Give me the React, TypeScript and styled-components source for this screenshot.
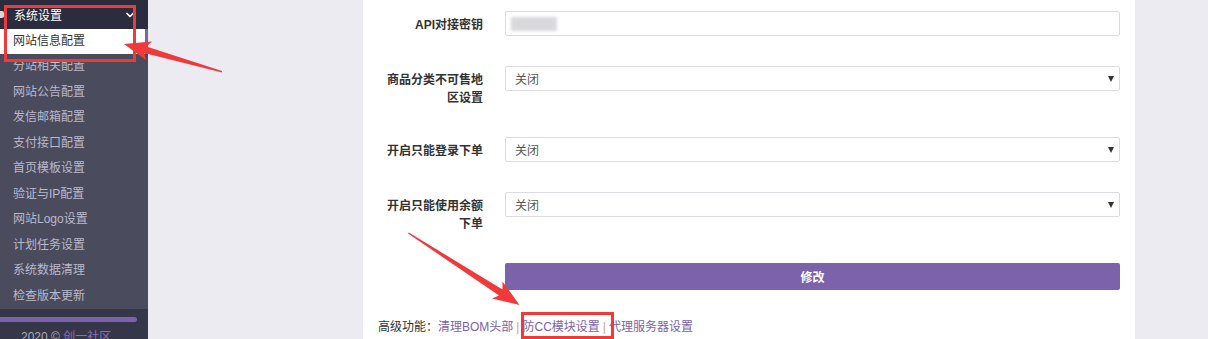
import styled, { createGlobalStyle } from "styled-components";
import { ChevronDown } from "lucide-react";

const GlobalStyle = createGlobalStyle`
  html, body {
    margin: 0;
    padding: 0;
    overflow: hidden;
  }
  body {
    font-family: "Liberation Sans", "Noto Sans CJK SC", sans-serif;
    font-size: 12px;
    color: #333;
  }
`;

const Page = styled.div`
  position: relative;
  display: flex;
  width: 1208px;
  height: 339px;
  overflow: hidden;
`;

const Sidebar = styled.aside`
  width: 148px;
  flex: 0 0 148px;
  display: flex;
  flex-direction: column;
  background: #4a4b5d;
  overflow: hidden;
`;

const MenuHeader = styled.div`
  flex-shrink: 0;
  height: 29px;
  display: flex;
  align-items: center;
  background: #2b2c3d;
  color: #fff;
  font-size: 12px;
  padding-right: 12px;
`;

const HeaderIcon = styled.span`
  width: 4px;
  height: 7px;
  margin-right: 10px;
  background: #d8d8e0;
  border-radius: 0 2px 2px 0;
`;

const HeaderTitle = styled.span`
  flex: 1;
`;

const MenuItem = styled.div<{ $active?: boolean }>`
  flex-shrink: 0;
  height: ${(p) => (p.$active ? "25px" : "25.5px")};
  line-height: ${(p) => (p.$active ? "25px" : "25.5px")};
  padding-left: 13px;
  font-size: 12px;
  color: ${(p) => (p.$active ? "#333" : "#b9b9cb")};
  background: ${(p) => (p.$active ? "#fff" : "transparent")};
  border-right: 3px solid ${(p) => (p.$active ? "#7b62aa" : "transparent")};
  white-space: nowrap;
`;

const SideFooter = styled.div`
  flex: 1 0 auto;
  background: #353648;
  padding-top: 8px;
`;

const FooterBar = styled.div`
  width: 137px;
  height: 5px;
  border-radius: 0 3px 3px 0;
  background: #7b62aa;
`;

const Copyright = styled.div`
  padding-left: 21px;
  margin-top: 5px;
  color: #a9a9b8;
  font-size: 12px;
  white-space: nowrap;
  & a {
    color: #8a6cc2;
    text-decoration: none;
  }
`;

const Main = styled.main`
  flex: 1;
  background: #ecebf2;
  padding-left: 215px;
`;

const Card = styled.section`
  width: 742px;
  height: 100%;
  background: #fff;
  padding: 11px 15px 0;
`;

const FormRow = styled.div`
  display: flex;
  align-items: flex-start;
  margin-bottom: 30px;
`;

const Label = styled.label`
  width: 105px;
  flex: 0 0 105px;
  text-align: right;
  font-weight: bold;
  font-size: 12px;
  line-height: 17.5px;
  padding-top: 6px;
  color: #333;
`;

const Field = styled.div`
  flex: 1;
  height: 23px;
  margin-left: 22px;
  border: 1px solid #dcdbe4;
  border-radius: 2px;
  display: flex;
  align-items: center;
  justify-content: space-between;
  padding: 0 5px 0 9px;
  color: #555;
  font-size: 12px;
`;

const Secret = styled.span`
  width: 46px;
  height: 14px;
  margin-left: -4px;
  background: #d9d9dd;
  filter: blur(1.5px);
`;

const Caret = styled.span`
  width: 0;
  height: 0;
  border-left: 3.5px solid transparent;
  border-right: 3.5px solid transparent;
  border-top: 6px solid #333;
`;

const SubmitRow = styled.div`
  padding-left: 127px;
`;

const SubmitButton = styled.button`
  width: 100%;
  height: 27px;
  border: none;
  border-radius: 2px;
  background: #7b62aa;
  color: #fff;
  font-family: inherit;
  font-size: 12px;
  font-weight: bold;
`;

const Advanced = styled.div`
  margin-top: 29px;
  line-height: 17px;
  font-size: 12px;
  color: #333;
  white-space: nowrap;
  & a {
    color: #7b62aa;
    text-decoration: none;
  }
`;

const Sep = styled.span`
  color: #d9a35b;
  margin: 0 3px;
`;

const Overlay = styled.svg`
  position: absolute;
  left: 0;
  top: 0;
  pointer-events: none;
`;

const menu = [
  "分站相关配置",
  "网站公告配置",
  "发信邮箱配置",
  "支付接口配置",
  "首页模板设置",
  "验证与IP配置",
  "网站Logo设置",
  "计划任务设置",
  "系统数据清理",
  "检查版本更新",
];

const selects = [
  { label: "商品分类不可售地区设置", value: "关闭" },
  { label: "开启只能登录下单", value: "关闭" },
  { label: "开启只能使用余额下单", value: "关闭" },
];

export default function App() {
  return (
    <>
      <GlobalStyle />
      <Page>
        <Sidebar>
          <MenuHeader>
            <HeaderIcon />
            <HeaderTitle>系统设置</HeaderTitle>
            <ChevronDown size={12} strokeWidth={3.5} color="#fff" />
          </MenuHeader>
          <MenuItem $active>网站信息配置</MenuItem>
          {menu.map((m) => (
            <MenuItem key={m}>{m}</MenuItem>
          ))}
          <SideFooter>
            <FooterBar />
            <Copyright>
              2020 © <a href="#">创一社区</a>
            </Copyright>
          </SideFooter>
        </Sidebar>

        <Main>
          <Card>
            <FormRow>
              <Label>API对接密钥</Label>
              <Field>
                <Secret />
              </Field>
            </FormRow>
            {selects.map((s) => (
              <FormRow key={s.label}>
                <Label>{s.label}</Label>
                <Field>
                  <span>{s.value}</span>
                  <Caret />
                </Field>
              </FormRow>
            ))}
            <SubmitRow>
              <SubmitButton>修改</SubmitButton>
            </SubmitRow>
            <Advanced>
              高级功能：<a href="#">清理BOM头部</a>
              <Sep>|</Sep>
              <a href="#">防CC模块设置</a>
              <Sep>|</Sep>
              <a href="#">代理服务器设置</a>
            </Advanced>
          </Card>
        </Main>

        {/* screenshot annotations */}
        <Overlay width="1208" height="339" viewBox="0 0 1208 339">
          <rect x="5.5" y="6.5" width="129" height="54" fill="none" stroke="#f2393a" strokeWidth="3" />
          <rect x="522.5" y="313.5" width="90" height="24" fill="none" stroke="#f2393a" strokeWidth="3" />
          <polygon
            points="222,71 146.4,46.6 152,41.5 124,44 146.2,60.2 144.2,53 222,72.5"
            fill="#f2393a"
          />
          <polygon
            points="408,233.5 499,295.5 492,298.5 519.5,305 502.5,281.5 502.5,289.5 408.8,232.5"
            fill="#f2393a"
          />
        </Overlay>
      </Page>
    </>
  );
}
